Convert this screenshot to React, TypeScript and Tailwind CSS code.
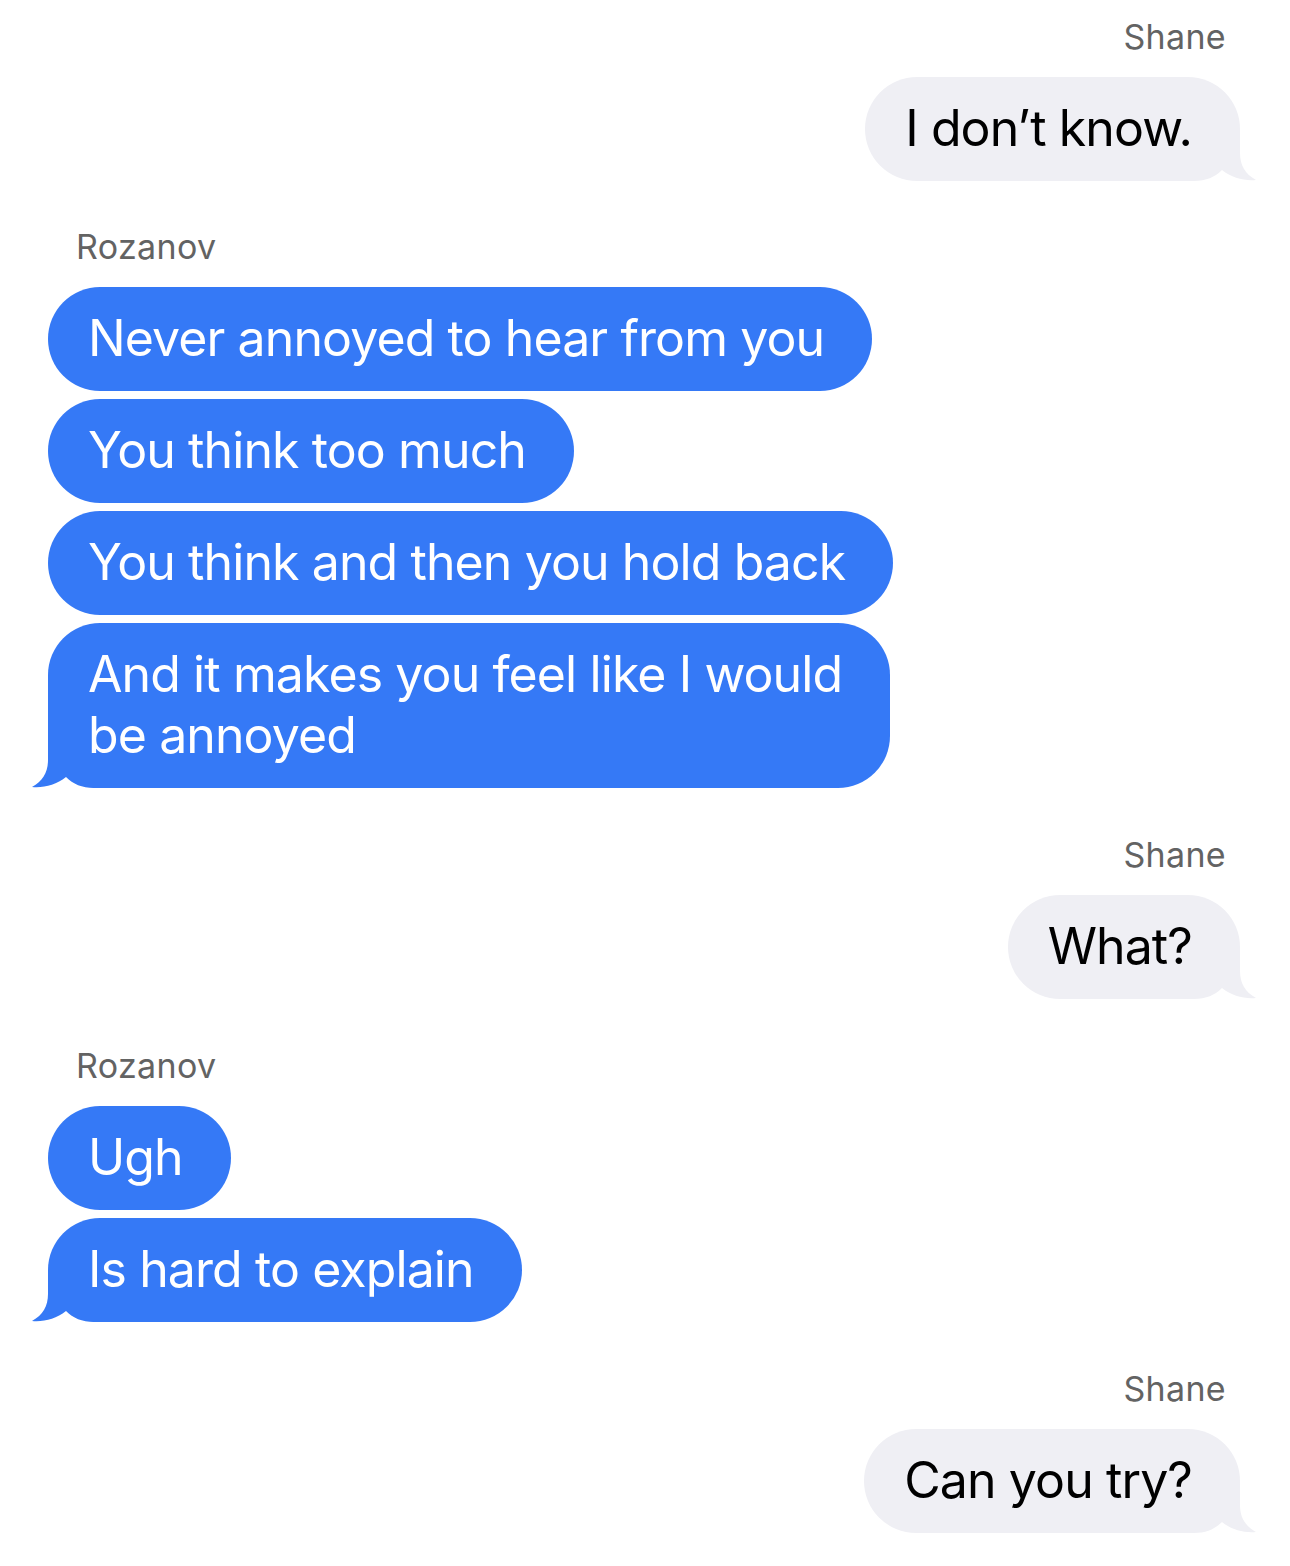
import React from "react";

type Msg = { from: "me" | "them"; name: string; lines: string[] };

const thread: Msg[] = [
  { from: "me", name: "Shane", lines: ["I don’t know."] },
  {
    from: "them",
    name: "Rozanov",
    lines: [
      "Never annoyed to hear from you",
      "You think too much",
      "You think and then you hold back",
      "And it makes you feel like I would\nbe annoyed",
    ],
  },
  { from: "me", name: "Shane", lines: ["What?"] },
  { from: "them", name: "Rozanov", lines: ["Ugh", "Is hard to explain"] },
  { from: "me", name: "Shane", lines: ["Can you try?"] },
];

// bubble tail, drawn for the left side; flipped for the right side
const Tail = ({ color, right }: { color: string; right?: boolean }) => (
  <svg
    width="72"
    height="52"
    viewBox="0 0 72 52"
    className={
      right
        ? "absolute bottom-0 right-[-16px] -scale-x-100"
        : "absolute bottom-0 left-[-16px]"
    }
  >
    <path
      d="M16 0 L16 24 C16 36 11 45 0 51 C12 52 24 49 34 41 C41 48 50 52 62 52 L72 52 L72 0 Z"
      fill={color}
    />
  </svg>
);

const Bubble = ({ text, mine, tail }: { text: string; mine: boolean; tail: boolean }) => (
  <div
    className={
      mine
        ? "relative whitespace-pre-line rounded-[52px] bg-[#efeff4] pl-[40px] pr-[48px] pt-[21px] pb-[22px] text-[50px] leading-[61px] tracking-[-0.018em] text-black"
        : "relative whitespace-pre-line rounded-[52px] bg-[#3579f6] pl-[40px] pr-[48px] pt-[21px] pb-[22px] text-[50px] leading-[61px] tracking-[-0.018em] text-white"
    }
  >
    {tail && <Tail color={mine ? "#efeff4" : "#3579f6"} right={mine} />}
    <span className="relative">{text}</span>
  </div>
);

export default function App() {
  return (
    <div
      className="min-h-[1566px] w-[1290px] bg-white pt-[17px] pl-[48px] pr-[50px]"
      style={{ fontFamily: "Inter, 'Noto Sans', sans-serif" }}
    >
      {thread.map((m, i) => {
        const mine = m.from === "me";
        return (
          <div
            key={i}
            className={`flex flex-col ${mine ? "items-end" : "items-start"} ${i === 0 ? "" : i === 1 ? "mt-[46px]" : "mt-[47px]"}`}
          >
            <div
              className={`text-[34px] leading-[40px] tracking-[0.01em] text-[#636363] ${mine ? "pr-[14px]" : "pl-[28px]"}`}
            >
              {m.name}
            </div>
            <div className={`mt-[20px] flex flex-col gap-[8px] ${mine ? "items-end" : "items-start"}`}>
              {m.lines.map((t, j) => (
                <Bubble key={j} text={t} mine={mine} tail={j === m.lines.length - 1} />
              ))}
            </div>
          </div>
        );
      })}
    </div>
  );
}
